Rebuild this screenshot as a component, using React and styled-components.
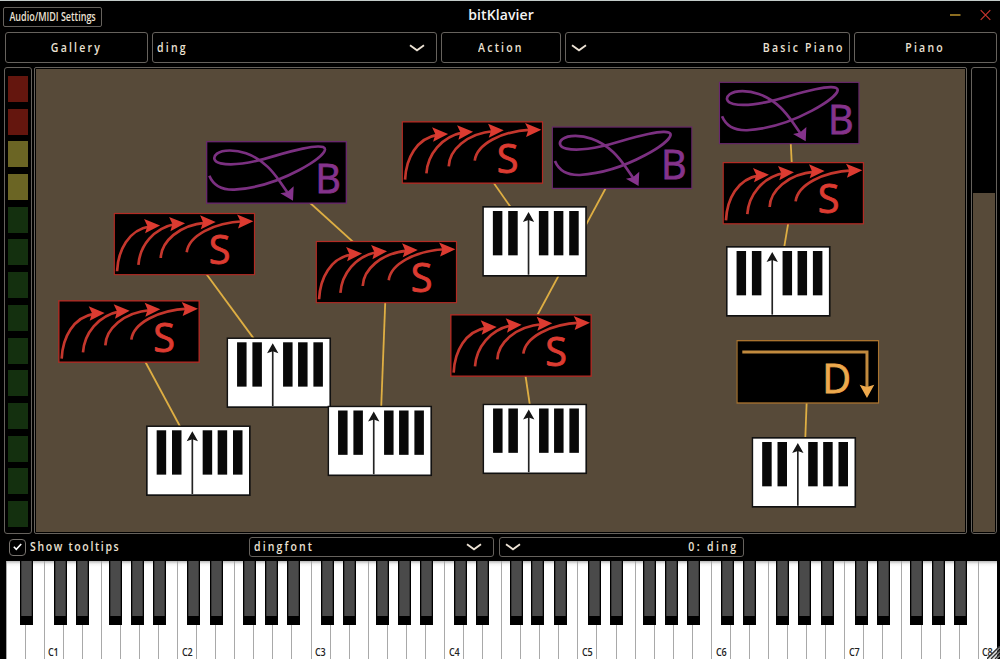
import React from 'react';
import styled, { createGlobalStyle, css } from 'styled-components';

const GlobalStyle = createGlobalStyle`
  * { box-sizing: border-box; }
  html, body { margin: 0; background: #000; overflow: hidden; }
  body { font-family: 'Open Sans', 'Noto Sans', sans-serif; }
  svg { display: block; }
`;

const BROWN = '#574a39';
const LINE = '#66625d';
const IVORY = '#ece2d4';

const Window = styled.div`
  width: 1000px;
  height: 659px;
  display: flex;
  flex-direction: column;
  background: #000;
  color: ${IVORY};
  border-top: 1px solid #c3cbc9;
  overflow: hidden;
`;

const Label = styled.span`
  display: inline-block;
  white-space: pre;
  font-size: ${(p) => p.$size || 13.3}px;
  font-weight: ${(p) => p.$weight || 600};
  line-height: 1;
  letter-spacing: ${(p) => p.$spacing ?? 2.8}px;
  transform: scaleX(${(p) => p.$scale || 0.79});
  transform-origin: ${(p) => p.$origin || 'center'};
`;

const TitleBar = styled.header`
  height: 31px;
  flex: none;
  display: grid;
  grid-template-columns: 1fr auto 1fr;
  align-items: center;
  padding: 0 9px 3px 3px;
`;

const SettingsButton = styled.button`
  width: 99px;
  height: 20px;
  margin-top: 4px;
  padding: 0;
  display: flex;
  align-items: center;
  justify-content: center;
  background: #000;
  border: 1px solid ${LINE};
  border-radius: 2px;
  color: ${IVORY};
  font-family: inherit;
`;

const Title = styled.h1`
  margin: 0 -4px 1px 4px;
  color: #f4f4f4;
  font-size: 14px;
  font-weight: 600;
  line-height: 1;
  letter-spacing: 0.1px;
`;

const WindowControls = styled.div`
  display: flex;
  justify-content: flex-end;
  align-items: center;
  gap: 19px;
`;

const Toolbar = styled.nav`
  flex: none;
  height: 31px;
  margin: 0 3px 0 5px;
  display: grid;
  grid-template-columns: 143px 285px 120px 285px 143px;
  column-gap: 4px;
`;

const panel = css`
  border: 1px solid ${LINE};
  border-radius: 3px;
  background: #000;
`;

const ToolButton = styled.div`
  ${panel}
  display: flex;
  align-items: center;
  justify-content: center;
`;

const Combo = styled.div`
  ${panel}
  display: flex;
  flex-direction: ${(p) => (p.$reverse ? 'row-reverse' : 'row')};
  align-items: center;
  justify-content: space-between;
  padding: ${(p) => (p.$reverse ? '0 4px 0 5px' : '0 11px 0 4px')};
`;

const Workspace = styled.main`
  flex: none;
  height: 467px;
  margin: 4px 3px 0 4px;
  display: grid;
  grid-template-columns: 28px 933px 28px;
  column-gap: 2px;
`;

const Meter = styled.div`
  ${panel}
  display: flex;
  flex-direction: column;
  justify-content: space-between;
  padding: 8px 3px 6px;
`;

const Cell = styled.i`
  display: block;
  width: 20px;
  height: 26px;
  background: ${(p) => p.$color};
`;

const Canvas = styled.section`
  border: 1px solid ${LINE};
  border-radius: 2px;
  padding: 1px;
  background: #000;
`;

const Surface = styled.div`
  position: relative;
  width: 100%;
  height: 100%;
  background: ${BROWN};
`;

const Cables = styled.svg`
  position: absolute;
  inset: 0;
`;

const Node = styled.div`
  position: absolute;
  left: 0;
  top: 0;
  transform: translate(${(p) => p.$x}px, ${(p) => p.$y}px);
`;

const VolumeTrack = styled.div`
  ${panel}
  margin-left: 2px;
  padding: 1px;
  display: flex;
  align-items: flex-end;
`;

const VolumeFill = styled.div`
  width: 100%;
  height: 339px;
  background: ${BROWN};
`;

const Footer = styled.div`
  flex: none;
  height: 27px;
  display: grid;
  grid-template-columns: 249px 245px 245px;
  padding-top: 3px;
`;

const TooltipToggle = styled.label`
  display: flex;
  align-items: center;
  gap: 4px;
  height: 20px;
  padding-left: 9px;
`;

const Box = styled.span`
  width: 17px;
  height: 17px;
  border: 1px solid #77736e;
  border-radius: 4px;
  display: grid;
  place-items: center;
`;

const FooterCombo = styled(Combo)`
  height: 20px;
  margin-left: ${(p) => p.$shift || 0}px;
  width: 245px;
`;

const Keyboard = styled.div`
  flex: none;
  position: relative;
  height: 98px;
  margin: 0 3px 0 5.5px;
  display: flex;
`;

const WhiteKey = styled.div`
  position: relative;
  flex: 1 1 0;
  min-width: 0;
  display: flex;
  align-items: flex-end;
  justify-content: center;
  padding-bottom: 2px;
  background: linear-gradient(#b9b9b9, #f4f4f4 3px, #fff 6px);
  border-left: 1px solid #a9a9a9;
  color: #222;
`;

const BlackKey = styled.div`
  position: absolute;
  z-index: 1;
  top: 0;
  left: ${(p) => p.$offset}px;
  width: 13px;
  height: 64px;
  background: #4a4a4a;
  border: solid #000;
  border-width: 0 1px 9px;
  box-shadow: inset 1px 0 #333, inset -1px 0 #333;
`;

const Grip = styled.svg`
  position: absolute;
  right: -3px;
  bottom: 0;
  z-index: 2;
`;

const Chevron = () => (
  <svg width="16" height="8" viewBox="0 0 16 8" fill="none">
    <path d="M1 1.2 8 6.3l7-5.1" stroke={IVORY} strokeWidth="1.8" />
  </svg>
);

const Letter = ({ x, y, color, children }) => (
  <text
    x={x}
    y={y}
    fill={color}
    stroke={color}
    strokeWidth="2.5"
    fontFamily="'Open Sans', sans-serif"
    fontSize="119"
    fontWeight="500"
  >
    {children}
  </text>
);

const RED = '#dc3b31';
const Synchronic = () => (
  <svg width="142" height="63" viewBox="0 0 426 189">
    <rect x="2.5" y="2.5" width="421" height="184" fill="#000" stroke="#b32b24" strokeWidth="4" />
    <g fill="none" stroke="#c4372d" strokeWidth="8">
      <path d="M11 176C14 112 45 52 110 41" />
      <path d="M75 157C79 100 120 47 185 34" />
      <path d="M142 136C144 88 195 37 278 30" />
      <path d="M220 119C226 70 300 30 390 26" />
    </g>
    <g fill={RED}>
      <path d="M140 39 92 19l10 21-7 22z" />
      <path d="M215 32 167 13l10 21-6 22z" />
      <path d="M307 28 260 8l9 21-7 21z" />
      <path d="M420 26 371 6l10 20-7 22z" />
    </g>
    <Letter x="286" y="155" color={RED}>S</Letter>
  </svg>
);

const PURPLE = '#85338c';
const Blendronic = () => (
  <svg width="141" height="63" viewBox="0 0 423 189">
    <rect x="2" y="2" width="419" height="184.5" fill="#000" stroke="#68276d" strokeWidth="4" />
    <path
      d="M10 104C22 133 50 147 85 146C150 142 220 119 280 87C325 63 355 39 357 26C358 11 320 17 290 23C240 33 190 51 150 60C110 69 72 73 44 67C22 62 20 48 33 38C50 25 90 26 120 37C175 56 205 98 222 122L247 158"
      fill="none"
      stroke="#7b3081"
      strokeWidth="8"
    />
    <path d="M261 179 223 157l21-4 19-17z" fill={PURPLE} />
    <Letter x="328" y="157" color={PURPLE}>B</Letter>
  </svg>
);

const Direct = () => (
  <svg width="143" height="64" viewBox="0 0 429 192">
    <rect x="2" y="2" width="425" height="187" fill="#000" stroke="#a9732f" strokeWidth="4" />
    <path d="M18 36H392V142" fill="none" stroke="#c18a3e" strokeWidth="9" />
    <path d="M392 174 370 134l22 7 22-7z" fill="#eda94d" />
    <Letter x="258" y="158" color="#eda94d">D</Letter>
  </svg>
);

const Keymap = () => (
  <svg width="105" height="71" viewBox="0 0 315 213">
    <rect x="2.5" y="2.5" width="309" height="207" fill="#fff" stroke="#111" strokeWidth="5" />
    {[32, 78, 170, 215, 261].map((x) => (
      <rect key={x} x={x} y="15" width="28.5" height="133" fill="#080808" />
    ))}
    <path d="M139 206V40" stroke="#222" strokeWidth="5" />
    <path d="M139 18l17 30-17-6-17 6z" fill="#151515" />
  </svg>
);

const kinds = {
  S: { Icon: Synchronic, w: 142, h: 63 },
  B: { Icon: Blendronic, w: 141, h: 63 },
  D: { Icon: Direct, w: 143, h: 64 },
  K: { Icon: Keymap, w: 105, h: 71 },
};

const nodes = {
  b1: ['B', 170, 72],
  s1: ['S', 77.4, 143.6],
  s2: ['S', 22, 231],
  s3: ['S', 279.4, 171.6],
  k1: ['K', 110, 356.3],
  k2: ['K', 190.4, 268.3],
  k3: ['K', 291.4, 336.5],
  s4: ['S', 365.4, 52],
  b2: ['B', 515.6, 57.3],
  k4: ['K', 446.2, 137],
  s5: ['S', 414, 245],
  k5: ['K', 446.4, 334.5],
  b3: ['B', 682.7, 12.6],
  s6: ['S', 686.3, 92.7],
  k6: ['K', 689.9, 177],
  d1: ['D', 700.3, 271],
  k7: ['K', 715.5, 368],
};

const cables = [
  ['b1', 's3'], ['s1', 'k2'], ['s2', 'k1'], ['s3', 'k3'], ['s4', 'k4'],
  ['b2', 's5'], ['s5', 'k5'], ['b3', 's6'], ['s6', 'k6'], ['d1', 'k7'],
];

const center = (id) => {
  const [kind, x, y] = nodes[id];
  return [x + kinds[kind].w / 2, y + kinds[kind].h / 2];
};

const cells = ['#64160e', '#64160e', '#6b6524', '#6b6524', ...Array(10).fill('#14300f')];

// Distance from a white key's left edge to the black key that follows it.
const sharpOffset = { A: 13.4, C: 9.4, D: 12.4, F: 7.4, G: 10.2 };
const whiteKeys = Array.from({ length: 52 }, (_, i) => ({
  note: 'ABCDEFG'[i % 7],
  octave: Math.floor((i + 5) / 7),
  last: i === 51,
}));

export default function App() {
  return (
    <>
      <GlobalStyle />
      <Window>
        <TitleBar>
          <SettingsButton>
            <Label $size={12} $spacing={0} $scale={0.75}>Audio/MIDI Settings</Label>
          </SettingsButton>
          <Title>bitKlavier</Title>
          <WindowControls>
            <svg width="11" height="12" viewBox="0 0 11 12">
              <path d="M0 6h10.5" stroke="#c99c2e" strokeWidth="1.4" />
            </svg>
            <svg width="11" height="12" viewBox="0 0 11 12">
              <path d="m.7 1.2 9.6 9.6m0-9.6-9.6 9.6" stroke="#c8332d" strokeWidth="1.2" />
            </svg>
          </WindowControls>
        </TitleBar>
        <Toolbar>
          <ToolButton><Label>Gallery</Label></ToolButton>
          <Combo><Label $origin="left">ding</Label><Chevron /></Combo>
          <ToolButton><Label>Action</Label></ToolButton>
          <Combo $reverse><Label $origin="right">Basic Piano</Label><Chevron /></Combo>
          <ToolButton><Label>Piano</Label></ToolButton>
        </Toolbar>
        <Workspace>
          <Meter>{cells.map((color, i) => <Cell key={i} $color={color} />)}</Meter>
          <Canvas>
            <Surface>
              <Cables width="929" height="463">
                {cables.map(([from, to]) => {
                  const [x1, y1] = center(from);
                  const [x2, y2] = center(to);
                  return <line key={from + to} x1={x1} y1={y1} x2={x2} y2={y2} stroke="#deae43" strokeWidth="1.8" />;
                })}
              </Cables>
              {Object.entries(nodes).map(([id, [kind, x, y]]) => {
                const { Icon } = kinds[kind];
                return <Node key={id} $x={x} $y={y}><Icon /></Node>;
              })}
            </Surface>
          </Canvas>
          <VolumeTrack><VolumeFill /></VolumeTrack>
        </Workspace>
        <Footer>
          <TooltipToggle>
            <Box>
              <svg width="9" height="8" viewBox="0 0 9 8" fill="none">
                <path d="m.8 3.8 2.5 2.5L8.2 1" stroke="#fff" strokeWidth="1.6" />
              </svg>
            </Box>
            <Label $origin="left" $spacing={2.1}>Show tooltips</Label>
          </TooltipToggle>
          <FooterCombo><Label $origin="left" $spacing={2.7}>dingfont</Label><Chevron /></FooterCombo>
          <FooterCombo $reverse $shift={5}><Label $origin="right" $spacing={3}>0: ding</Label><Chevron /></FooterCombo>
        </Footer>
        <Keyboard>
          {whiteKeys.map(({ note, octave, last }, i) => (
            <WhiteKey key={i}>
              {note === 'C' && <Label $size={10.5} $spacing={0} $scale={0.86}>{`C${octave}`}</Label>}
              {!last && sharpOffset[note] !== undefined && <BlackKey $offset={sharpOffset[note]} />}
            </WhiteKey>
          ))}
          <Grip width="13" height="13" viewBox="0 0 13 13">
            <path d="M0 13 13 0M4 13l9-9M8 13l5-5" stroke="#333" strokeWidth="1.6" />
            <path d="M1.5 13 13 1.5M5.5 13 13 5.5M9.5 13 13 9.5" stroke="#ccc" strokeWidth="1" />
          </Grip>
        </Keyboard>
      </Window>
    </>
  );
}
